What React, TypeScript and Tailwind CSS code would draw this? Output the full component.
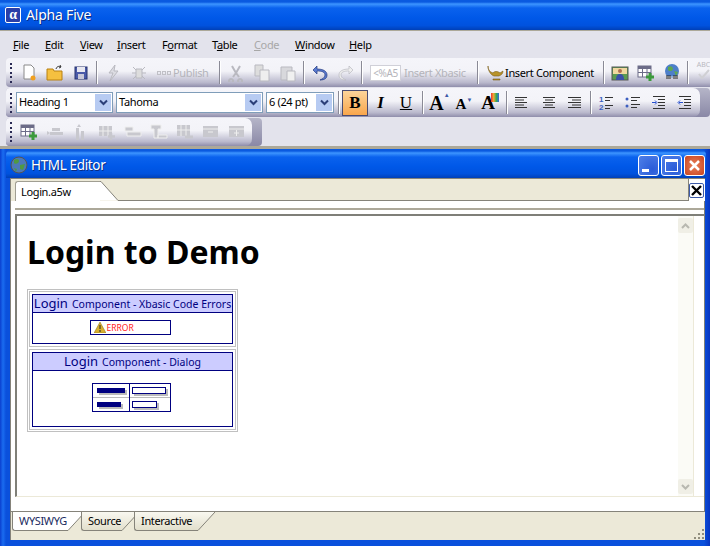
import type { ReactNode } from "react";

const D = "#b9b9c0";
const BAR = "bg-[linear-gradient(180deg,#f5f5fa_0,#f3f3f8_45%,#b9b8cc_85%,#8f8dab_100%)]";
const CAP = "bg-[linear-gradient(180deg,#b5b5c8,#8a88a6)]";

function Sep() {
  return <div className="mx-[2px] h-[23px] w-[2px] shrink-0 border-l border-r border-l-[#8a8a96] border-r-white" />;
}

function Grip() {
  return (
    <div className="ml-[4px] mr-[2px] flex h-[20px] w-[2px] shrink-0 flex-col justify-between">
      <i className="h-[2px] bg-[#2a2a55]" />
      <i className="h-[2px] bg-[#2a2a55]" />
      <i className="h-[2px] bg-[#2a2a55]" />
      <i className="h-[2px] bg-[#2a2a55]" />
      <i className="h-[2px] bg-[#2a2a55]" />
    </div>
  );
}

function Slot({ children }: { children: ReactNode }) {
  return <div className="flex h-[24px] w-[26px] shrink-0 items-center justify-center">{children}</div>;
}

function Ico({ children }: { children: ReactNode }) {
  return (
    <svg width="18" height="18" viewBox="0 0 18 18">
      {children}
    </svg>
  );
}

function TableIcon({ c = D, plus }: { c?: string; plus?: string }) {
  return (
    <Ico>
      <rect x="1" y="2" width="13" height="11" fill="#fff" stroke={c} />
      <rect x="1" y="2" width="13" height="3" fill={c} />
      <path d="M5.500 5v8M10 5v8M1 8.500h13" stroke={c} />
      {plus && <path d="M13 9v8M9 13h8" stroke={plus} strokeWidth="3" />}
    </Ico>
  );
}

function RowIcon({ kind }: { kind: number }) {
  const c = "#c8c8ce";
  if (kind === 0)
    return (
      <Ico>
        <path d="M1 8l3 2-3 2zM6 5h8v3H6zM4 9h13v3H4z" fill={c} />
      </Ico>
    );
  if (kind === 1)
    return (
      <Ico>
        <path d="M7 1l2 3H5zM4 5h3v12H4zM9 8h3v9H9z" fill={c} />
      </Ico>
    );
  if (kind === 2)
    return (
      <Ico>
        <rect x="1" y="3" width="13" height="10" fill={c} />
        <path d="M5 3v10M10 3v10M1 8h13" stroke="#eee" />
        <path d="M13 10v7M10 13.500h7" stroke={c} strokeWidth="2.500" />
      </Ico>
    );
  if (kind === 3)
    return (
      <Ico>
        <path d="M1 4h8v4H1zM3 9h14v4H3z" fill={c} stroke="#eee" />
      </Ico>
    );
  if (kind === 4)
    return (
      <Ico>
        <path d="M1 2h10v4H8v9H4V6H1zM8 12h9v3H8z" fill={c} stroke="#eee" />
      </Ico>
    );
  if (kind === 5)
    return (
      <Ico>
        <rect x="1" y="2" width="13" height="11" fill={c} />
        <path d="M5 2v11M10 2v11M1 7h13" stroke="#eee" />
        <path d="M9 14h8" stroke={c} strokeWidth="3" />
      </Ico>
    );
  return (
    <Ico>
      <rect x="1" y="3" width="15" height="11" fill={c} />
      <path d="M1 6h15" stroke="#eee" />
      {kind === 6 ? <path d="M6 9h5" stroke="#eee" /> : <path d="M8.500 7v6M6 10h5" stroke="#eee" />}
    </Ico>
  );
}

function Chevron() {
  return (
    <svg width="9" height="7" viewBox="0 0 9 7">
      <path d="M1 1.500l3.500 3.500L8 1.500" fill="none" stroke="#2b3f78" strokeWidth="2" />
    </svg>
  );
}

function Combo({ w, label }: { w: string; label: string }) {
  return (
    <div className={`flex h-[21px] shrink-0 items-center whitespace-nowrap border border-[#7f9db9] bg-white pl-[2px] text-[11px] text-black ${w}`}>
      <span className="flex-1">{label}</span>
      <span className="mr-[1px] flex h-[17px] w-[16px] items-center justify-center bg-[#b7cbf2]">
        <Chevron />
      </span>
    </div>
  );
}

function Lines({ rows }: { rows: [number, number][] }) {
  return (
    <Ico>
      {rows.map(([x, w], i) => (
        <path key={i} d={`M${x} ${3.5 + i * 2.5}h${w}`} stroke="#333" />
      ))}
    </Ico>
  );
}

function Menu({ w, children, dim }: { w: string; children: ReactNode; dim?: boolean }) {
  return <span className={`shrink-0 whitespace-nowrap ${w} ${dim ? "text-[#a8a8a8]" : "text-black"}`}>{children}</span>;
}

function Toolbar1() {
  return (
    <div className={`ml-[6px] flex h-[29px] items-center whitespace-nowrap rounded-l-[4px] ${BAR}`}>
      <Grip />
      <div className="w-[2px] shrink-0" />
      <Slot>
        <Ico>
          <path d="M4 1h7l3 3v11H4z" fill="#fff" stroke="#8a8a8a" />
          <circle cx="13" cy="14" r="2.500" fill="#f0a020" />
        </Ico>
      </Slot>
      <Slot>
        <Ico>
          <path d="M1 5h6l1 2h8v9H1z" fill="#f5c040" stroke="#b88010" />
          <path d="M10 5c1-3 3-3 5-2l-1-2m1 2l-2 1" fill="none" stroke="#333" />
        </Ico>
      </Slot>
      <Slot>
        <Ico>
          <rect x="3" y="3" width="12" height="12" fill="#4a5aa8" stroke="#27336e" />
          <rect x="5" y="3" width="8" height="5" fill="#e8e8f0" />
          <rect x="6" y="10" width="6" height="5" fill="#c8c8d8" />
        </Ico>
      </Slot>
      <Sep />
      <Slot>
        <Ico>
          <path d="M11 1L5 9h4l-3 8 8-10h-4z" fill="#dcdce2" stroke={D} />
        </Ico>
      </Slot>
      <Slot>
        <Ico>
          <path d="M6 5h6v9H6zM3 3l3 3M15 3l-3 3M2 9h4M16 9h-4M3 15l3-3M15 15l-3-3" fill="#ddd" stroke={D} />
        </Ico>
      </Slot>
      <div className="flex w-[65px] shrink-0 items-center gap-[2px] pl-[5px] text-[#b4b4ba]">
        <span className="flex gap-[1px]">
          <i className="h-[4px] w-[4px] border border-[#c0c0c6]" />
          <i className="h-[4px] w-[4px] border border-[#c0c0c6]" />
          <i className="h-[4px] w-[4px] border border-[#c0c0c6]" />
        </span>
        <span>Publish</span>
      </div>
      <Sep />
      <Slot>
        <Ico>
          <path d="M5 2l4 7 4-7M4 15a2 2 0 1 0 .1 0M13 15a2 2 0 1 0 .1 0M6 13l3-4 3 4" fill="none" stroke={D} strokeWidth="2" />
        </Ico>
      </Slot>
      <Slot>
        <Ico>
          <path d="M2 1h8v11H2z" fill="#ddd" stroke={D} />
          <path d="M7 6h9v11H7z" fill="#eee" stroke={D} />
        </Ico>
      </Slot>
      <Slot>
        <Ico>
          <path d="M2 3h11v13H2z" fill="#d8d8dc" stroke={D} />
          <path d="M8 7h8v10H8z" fill="#f0f0f0" stroke={D} />
        </Ico>
      </Slot>
      <Sep />
      <Slot>
        <Ico>
          <path d="M6 2L2 6l4 4V7c5 0 8 1 8 4s-3 4-5 5c5 0 7-2 7-5 0-4-4-6-10-6z" fill="#5a7ad0" stroke="#24397e" strokeWidth=".7" />
        </Ico>
      </Slot>
      <Slot>
        <Ico>
          <path d="M12 2l4 4-4 4V7C7 7 4 8 4 11s3 4 5 5c-5 0-7-2-7-5 0-4 4-6 10-6z" fill="#eee" stroke={D} strokeWidth=".7" />
        </Ico>
      </Slot>
      <Sep />
      <div className="ml-[5px] flex h-[24px] w-[105px] shrink-0 items-center gap-[3px] text-[#b4b4ba]">
        <span className="w-[31px] shrink-0 border border-[#d0d0d8] bg-white text-center text-[10px] leading-[14px]">{"<%A5"}</span>
        <span>Insert Xbasic</span>
      </div>
      <Sep />
      <div className="flex h-[24px] w-[120px] shrink-0 items-center pl-[6px]">
        <svg width="17" height="16" viewBox="0 0 17 16" className="mr-[1px] shrink-0">
          <path d="M1 1c0 4 2 6 5 7 1-2 5-2 7 0l3-2c0 3-2 4-4 5H7C4 10 1 6 1 1zM6 14h7v1H6z" fill="#b8932a" stroke="#7b5d14" strokeWidth=".6" />
        </svg>
        <span>Insert Component</span>
      </div>
      <Sep />
      <Slot>
        <Ico>
          <rect x="1" y="3" width="16" height="13" fill="#5a9a50" stroke="#555" />
          <rect x="2" y="4" width="14" height="6" fill="#f0d8a0" />
          <circle cx="9" cy="7" r="2" fill="#b07050" />
          <path d="M5 16c0-5 2-6 4-6s4 1 4 6z" fill="#3b4fa8" />
        </Ico>
      </Slot>
      <Slot>
        <TableIcon c="#6c6c88" plus="#3c9a3c" />
      </Slot>
      <Slot>
        <Ico>
          <circle cx="9" cy="7" r="7" fill="#4d7fc9" />
          <path d="M5 3c3-2 5 0 5 2s-4 3-5 1zM11 7l4 1-2 4z" fill="#5fa84f" />
          <path d="M3 13h5M10 13h5" stroke="#222" strokeWidth="3" />
          <path d="M3 13h12" stroke="#ddd" />
        </Ico>
      </Slot>
      <Sep />
      <div className="ml-[5px] flex h-[24px] w-[15px] shrink-0 flex-col items-center text-[7px] leading-[8px] tracking-normal text-[#b9b9c0]">
        <span>ABC</span>
        <svg width="14" height="10" viewBox="0 0 14 10">
          <path d="M2 5l3 4 7-8" fill="none" stroke="#d0d0d4" strokeWidth="2" />
        </svg>
      </div>
    </div>
  );
}

function Toolbar2() {
  const serif = "font-['Liberation_Serif',serif] tracking-normal";
  return (
    <div className={`ml-[6px] mt-[1px] w-[704px] rounded-[4px] ${CAP}`}>
      <div className={`flex h-[29px] w-[694px] items-center rounded-[4px] rounded-r-[7px] ${BAR}`}>
        <Grip />
        <div className="w-[2px] shrink-0" />
        <div className="flex gap-[3px] pb-[1px]">
          <Combo w="w-[97px]" label="Heading 1" />
          <Combo w="w-[147px]" label="Tahoma" />
          <Combo w="w-[68px]" label="6 (24 pt)" />
        </div>
        <div className="w-[2px] shrink-0" />
        <Sep />
        <div className={`flex h-[26px] w-[26px] shrink-0 items-center justify-center border border-[#4b4b6f] bg-[linear-gradient(180deg,#fdd49a,#f9a64c)] text-[17px] font-bold text-black ${serif}`}>
          B
        </div>
        <div className={`flex w-[25px] shrink-0 justify-center text-[17px] font-bold italic text-black ${serif}`}>I</div>
        <div className={`flex w-[26px] shrink-0 justify-center text-[17px] text-black underline ${serif}`}>U</div>
        <div className="w-[1px] shrink-0" />
        <Sep />
        <div className={`flex w-[25px] shrink-0 items-start justify-center pl-[2px] text-[20px] font-bold leading-none text-black ${serif}`}>
          A<span className="-mt-[1px] text-[6px] text-[#3c5aa8]">▲</span>
        </div>
        <div className={`flex w-[26px] shrink-0 items-start justify-center pt-[4px] text-[15px] font-bold leading-none text-black ${serif}`}>
          A<span className="text-[6px] text-[#3c5aa8]">▼</span>
        </div>
        <div className={`flex w-[26px] shrink-0 items-start justify-center text-[19px] font-bold leading-none text-black ${serif}`}>
          A<span className="-ml-[4px] h-[9px] w-[8px] bg-[linear-gradient(90deg,#e33,#ea3,#3a5,#36d)]" />
        </div>
        <div className="w-[1px] shrink-0" />
        <Sep />
        <Slot>
          <Lines rows={[[1, 12], [1, 9], [1, 12], [1, 9], [1, 12]]} />
        </Slot>
        <Slot>
          <Lines rows={[[3, 12], [5, 8], [3, 12], [5, 8], [3, 12]]} />
        </Slot>
        <Slot>
          <Lines rows={[[2, 13], [6, 9], [2, 13], [6, 9], [2, 13]]} />
        </Slot>
        <Sep />
        <Slot>
          <Ico>
            <text x="1" y="8" fontSize="8" fontWeight="700" fill="#3c5ec0" fontFamily="Liberation Sans">1</text>
            <text x="1" y="16" fontSize="8" fontWeight="700" fill="#3c5ec0" fontFamily="Liberation Sans">2</text>
            <path d="M7 3.500h8M7 6.500h5M7 11.500h8M7 14.500h5" stroke="#333" />
          </Ico>
        </Slot>
        <Slot>
          <Ico>
            <circle cx="3" cy="5" r="1.500" fill="#3c5ec0" />
            <circle cx="3" cy="12" r="1.500" fill="#3c5ec0" />
            <path d="M7 3.500h9M7 6.500h6M7 10.500h9M7 13.500h6" stroke="#333" />
          </Ico>
        </Slot>
        <Slot>
          <Ico>
            <path d="M3 2.500h12M8 5.500h7M8 8.500h7M8 11.500h7M3 14.500h12" stroke="#333" />
            <path d="M2 8.500h4M5 6.500l2 2-2 2" fill="none" stroke="#2850d0" />
          </Ico>
        </Slot>
        <Slot>
          <Ico>
            <path d="M3 2.500h12M8 5.500h7M8 8.500h7M8 11.500h7M3 14.500h12" stroke="#333" />
            <path d="M3 8.500h4M4 6.500l-2 2 2 2" fill="none" stroke="#2850d0" />
          </Ico>
        </Slot>
      </div>
    </div>
  );
}

function Toolbar3() {
  return (
    <div className={`ml-[6px] mt-[1px] w-[256px] rounded-[4px] ${CAP}`}>
      <div className={`flex h-[28px] w-[246px] items-center rounded-[4px] rounded-r-[7px] ${BAR}`}>
        <Grip />
        <div className="w-[2px] shrink-0" />
        <Slot>
          <TableIcon c="#6c6c88" plus="#3c9a3c" />
        </Slot>
        {[0, 1, 2, 3, 4, 5, 6, 7].map((k) => (
          <Slot key={k}>
            <RowIcon kind={k} />
          </Slot>
        ))}
      </div>
    </div>
  );
}

function CapBtn({ children, red }: { children: ReactNode; red?: boolean }) {
  return (
    <div
      className={`flex h-[21px] w-[21px] items-center justify-center rounded-[3px] border border-white ${
        red ? "bg-[radial-gradient(circle,#e8805a,#c8431f)]" : "bg-[radial-gradient(circle_at_70%_70%,#2a5bd8,#4f80e8)]"
      }`}
    >
      {children}
    </div>
  );
}

function LoginBox({ title, children, h }: { title: string; children: ReactNode; h: string }) {
  return (
    <div className="border border-[#c0c0c0] p-[2px]">
      <div className={`border border-[#000080] ${h}`}>
        <div className="flex h-[18px] items-baseline justify-center whitespace-nowrap border-b border-[#000080] bg-[#ccccff] text-[10.500px] leading-[17px] tracking-normal text-[#000080]">
          <span className="mr-[4px] text-[13px]">Login</span>
          {title}
        </div>
        {children}
      </div>
    </div>
  );
}

function Bar({ w }: { w: string }) {
  return <div className={`h-[5px] bg-[#000080] shadow-[2px_2px_0_#bbbbbb] ${w}`} />;
}

function Field({ w }: { w: string }) {
  return <div className={`h-[7px] border border-[#000080] bg-white shadow-[2px_2px_0_#bbbbbb] ${w}`} />;
}

function Editor() {
  return (
    <div className="flex min-h-0 flex-1 flex-col border-r border-[#7f7f78] bg-white pl-[4px]">
      <div className="h-[7px] shrink-0" />
      <div className="flex min-h-0 flex-1 flex-col border-t-2 border-[#aca899] pt-[4px]">
        <div className="flex min-h-0 flex-1 border-b border-l-2 border-t-2 border-b-[#ece9d8] border-l-[#7f7f78] border-t-[#7f7f78] bg-white">
          <div className="min-w-0 flex-1 pl-[10px] pt-[17px]">
            <h1 className="text-[32px] font-bold leading-[38px] tracking-normal text-black">Login to Demo</h1>
            <div className="mt-[18px] flex w-[211px] flex-col gap-[2px] border border-[#c0c0c0] p-[1px]">
              <LoginBox title="Component - Xbasic Code Errors" h="h-[50px]">
                <div className="flex justify-center pr-[5px] pt-[7px]">
                  <div className="flex h-[15px] w-[81px] items-center border border-[#000080] pl-[3px] text-[8.500px] tracking-normal text-[#ff2020]">
                    <svg width="12" height="11" viewBox="0 0 12 11" className="mr-[1px]">
                      <path d="M6 0l6 11H0z" fill="#d8b030" stroke="#8c6e12" strokeWidth=".5" />
                      <path d="M6 3v4M6 8v2" stroke="#222" />
                    </svg>
                    ERROR
                  </div>
                </div>
              </LoginBox>
              <LoginBox title="Component - Dialog" h="h-[75px]">
                <div className="flex justify-center pr-[3px] pt-[12px]">
                  <div className="grid h-[29px] w-[79px] grid-cols-[37px_1fr] border border-[#000080]">
                    <div className="flex flex-col border-r border-[#000080]">
                      <div className="flex h-[14px] items-center border-b border-[#bbbbbb] pl-[4px]">
                        <Bar w="w-[28px]" />
                      </div>
                      <div className="flex flex-1 items-center pl-[4px]">
                        <Bar w="w-[24px]" />
                      </div>
                    </div>
                    <div className="flex flex-col">
                      <div className="flex h-[14px] items-center border-b border-[#bbbbbb] pl-[2px]">
                        <Field w="w-[34px]" />
                      </div>
                      <div className="flex flex-1 items-center pl-[2px]">
                        <Field w="w-[25px]" />
                      </div>
                    </div>
                  </div>
                </div>
              </LoginBox>
            </div>
          </div>
          <div className="flex w-[16px] shrink-0 flex-col justify-between border-r border-[#ece9d8] bg-[#fbfbf6] py-[2px]">
            <div className="flex h-[15px] w-[15px] items-center justify-center rounded-[2px] bg-[#f0efe6]">
              <svg width="9" height="6" viewBox="0 0 9 6">
                <path d="M1 5l3.500-3.500L8 5" fill="none" stroke="#b8b8b0" strokeWidth="2" />
              </svg>
            </div>
            <div className="flex h-[15px] w-[15px] items-center justify-center rounded-[2px] bg-[#f0efe6]">
              <svg width="9" height="6" viewBox="0 0 9 6">
                <path d="M1 1l3.500 3.500L8 1" fill="none" stroke="#b8b8b0" strokeWidth="2" />
              </svg>
            </div>
          </div>
          <div className="w-[10px] shrink-0" />
        </div>
        <div className="h-[14px] shrink-0" />
      </div>
    </div>
  );
}

function BottomTab({ label, w, active }: { label: string; w: string; active?: boolean }) {
  const fill = active ? "#ffffff" : "url(#tabfill)";
  return (
    <div className={`-mr-[1px] flex h-[19px] shrink-0 ${w}`}>
      <div className={`flex h-full flex-1 items-center rounded-bl-[3px] border-b border-l border-[#85837a] pl-[6px] ${active ? "bg-white text-[#1a2a60]" : "bg-[linear-gradient(180deg,#f9f8f0,#e2dfcc)] text-black"}`}>
        {label}
      </div>
      <svg width="18" height="19" viewBox="0 0 18 19" className="shrink-0">
        <defs>
          <linearGradient id="tabfill" x1="0" y1="0" x2="0" y2="1">
            <stop offset="0" stopColor="#f9f8f0" />
            <stop offset="1" stopColor="#e2dfcc" />
          </linearGradient>
        </defs>
        <path d="M0 0h18L1 18.500H0z" fill={fill} />
        <path d="M18 0L1 18.500H0" fill="none" stroke="#85837a" />
      </svg>
    </div>
  );
}

export default function App() {
  const cap = "bg-[linear-gradient(180deg,#0a5ae0_0,#0a5ae0_2px,#3d95ff_4px,#0a62ee_8px,#0058e8_60%,#0052de_85%,#0040b8_100%)]";
  return (
    <div className="flex h-[546px] w-[710px] flex-col overflow-hidden bg-[#e3e3ec] font-['Noto_Sans',sans-serif] text-[11px] leading-[14px] tracking-[-0.35px]">
      <div className={`flex h-[30px] shrink-0 items-center pl-[5px] text-[14px] tracking-[-0.2px] text-white ${cap}`}>
        <div className="mr-[5px] flex h-[16px] w-[16px] items-center justify-center rounded-[2px] border border-white bg-[#2a3fa8] font-['Liberation_Serif',serif] text-[14px] font-bold leading-none">
          α
        </div>
        <span className="[text-shadow:1px_1px_0_#0a2a80]">Alpha Five</span>
      </div>
      <div className="h-[1px] shrink-0 bg-[#aca899]" />
      <div className="flex h-[27px] shrink-0 items-center pl-[13px]">
        <Menu w="w-[32px]"><u>F</u>ile</Menu>
        <Menu w="w-[35px]"><u>E</u>dit</Menu>
        <Menu w="w-[37px]"><u>V</u>iew</Menu>
        <Menu w="w-[45px]"><u>I</u>nsert</Menu>
        <Menu w="w-[50px]">F<u>o</u>rmat</Menu>
        <Menu w="w-[42px]">T<u>a</u>ble</Menu>
        <Menu w="w-[41px]" dim><u>C</u>ode</Menu>
        <Menu w="w-[54px]"><u>W</u>indow</Menu>
        <Menu w="w-[30px]"><u>H</u>elp</Menu>
      </div>
      <div className="shrink-0">
        <Toolbar1 />
        <Toolbar2 />
        <Toolbar3 />
      </div>
      <div className="h-[3px] shrink-0 bg-[#aca899]" />
      <div className="flex min-h-0 flex-1 flex-col bg-[linear-gradient(90deg,#0a3fd0_0,#1a6cf0_3px,#0a50dc_6px,#0a50dc_704px,#0835c0_710px)] pb-[6px] pl-[10px] pr-[5px]">
        <div className={`-ml-[4px] -mr-[1px] flex h-[29px] shrink-0 items-center rounded-t-[6px] pl-[4px] pr-[1px] pt-[3px] text-[13.500px] text-white ${cap}`}>
          <svg width="18" height="18" viewBox="0 0 18 18" className="mr-[3px]">
            <circle cx="9" cy="9" r="8" fill="#4d79b8" />
            <path d="M4 4c3-2 5-1 5 1s-3 4-5 2zM10 9l5-1-2 6-3-1zM4 12l3 1-1 3z" fill="#4f9a42" />
            <circle cx="9" cy="9" r="8" fill="none" stroke="#555" />
          </svg>
          <span className="[text-shadow:1px_1px_0_#0a2a80]">HTML Editor</span>
          <div className="ml-auto flex gap-[2px]">
            <CapBtn>
              <i className="mr-[6px] mt-[10px] h-[3px] w-[7px] bg-white" />
            </CapBtn>
            <CapBtn>
              <i className="h-[13px] w-[13px] border border-t-[3px] border-white" />
            </CapBtn>
            <CapBtn red>
              <svg width="13" height="13" viewBox="0 0 13 13">
                <path d="M2 2l9 9M11 2l-9 9" stroke="#fff" strokeWidth="2.500" />
              </svg>
            </CapBtn>
          </div>
        </div>
        <div className="flex min-h-0 flex-1 flex-col border-l border-t border-[#85837a] bg-[#ece9d8]">
          <div className="flex h-[22px] shrink-0 items-end pl-[4px]">
            <div className="flex h-[20px] w-[85px] shrink-0 items-center rounded-tl-[3px] border-l border-t border-[#a09e92] bg-white pl-[5px]">
              Login.a5w
            </div>
            <svg width="18" height="20" viewBox="0 0 18 20" className="shrink-0">
              <path d="M0 .5L1 .5 18 19.500H0z" fill="#fff" />
              <path d="M0 .5h1L18 19.500" fill="none" stroke="#85837a" />
            </svg>
            <div className="h-[1px] flex-1 bg-[#85837a]" />
            <div className="flex h-full w-[17px] shrink-0 items-center justify-end border-l border-[#85837a] bg-white pr-[1px]">
              <div className="flex h-[15px] w-[15px] items-center justify-center rounded-[2px] border border-[#3c5aa8] bg-white">
                <svg width="11" height="11" viewBox="0 0 11 11">
                  <path d="M1 1l9 9M10 1l-9 9" stroke="#000" strokeWidth="2.400" />
                </svg>
              </div>
            </div>
          </div>
          <Editor />
          <div className="flex h-[29px] shrink-0 items-start border-t border-[#85837a] pl-[1px]">
            <BottomTab label="WYSIWYG" w="w-[70px]" active />
            <BottomTab label="Source" w="w-[54px]" />
            <BottomTab label="Interactive" w="w-[81px]" />
            <div className="mb-[1px] ml-auto grid grid-cols-3 gap-[2px] self-end pr-[1px]">
              <i className="h-[2px] w-[2px]" />
              <i className="h-[2px] w-[2px]" />
              <i className="h-[2px] w-[2px] bg-[#918e7e]" />
              <i className="h-[2px] w-[2px]" />
              <i className="h-[2px] w-[2px] bg-[#918e7e]" />
              <i className="h-[2px] w-[2px] bg-[#918e7e]" />
              <i className="h-[2px] w-[2px] bg-[#918e7e]" />
              <i className="h-[2px] w-[2px] bg-[#918e7e]" />
              <i className="h-[2px] w-[2px] bg-[#918e7e]" />
            </div>
          </div>
        </div>
      </div>
    </div>
  );
}
